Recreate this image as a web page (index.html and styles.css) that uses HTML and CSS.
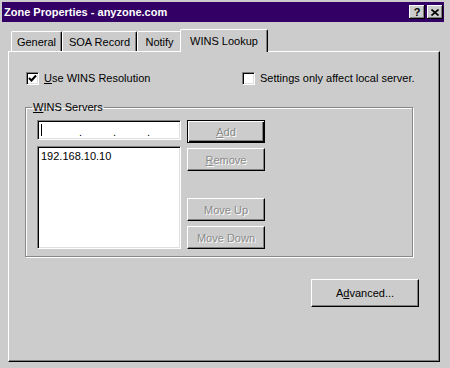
FILE: index.html
```html
<!DOCTYPE html>
<html lang="en">
<head>
    <meta charset="UTF-8">
    <title>Zone Properties - anyzone.com</title>
<link rel="stylesheet" href="styles.css">
</head>
<body>
  <div class="window">
    <div class="titlebar">
        <span class="title">Zone Properties - anyzone.com</span>
        <div class="title-buttons">
            <span class="tbtn">?</span>
            <span class="tbtn">
                <svg width="8" height="7" viewBox="0 0 8 7"><path d="M0.5 0.5 L7.5 6.5 M7.5 0.5 L0.5 6.5" stroke="#000" stroke-width="1.6"/></svg>
            </span>
        </div>
    </div>

    <div class="tabs">
        <div class="tab tab-general">General</div>
        <div class="tab tab-soa">SOA Record</div>
        <div class="tab tab-notify">Notify</div>
        <div class="tab tab-wins active">WINS Lookup</div>
    </div>

    <div class="panel">
        <div class="options">
            <label class="check">
                <span class="box"><svg width="9" height="9" viewBox="0 0 9 9"><path d="M1 4 L3.5 6.5 L8 1.5" fill="none" stroke="#000" stroke-width="2"/></svg></span>
                <span><u>U</u>se WINS Resolution</span>
            </label>
            <label class="check">
                <span class="box"></span>
                <span>Settings only affect local server.</span>
            </label>
        </div>

        <fieldset class="group">
            <legend><u>W</u>INS Servers</legend>
            <div class="group-body">
                <div class="fields">
                    <div class="ip-field">
                        <span class="caret"></span>
                        <span class="dot">.</span>
                        <span class="dot">.</span>
                        <span class="dot">.</span>
                    </div>
                    <div class="list">
                        <div class="list-item">192.168.10.10</div>
                    </div>
                </div>
                <div class="buttons">
                    <button class="btn default" disabled><u>A</u>dd</button>
                    <button class="btn" disabled><u>R</u>emove</button>
                    <button class="btn move-up" disabled>Move Up</button>
                    <button class="btn" disabled>Move Down</button>
                </div>
            </div>
        </fieldset>

        <div class="footer">
            <button class="btn advanced">A<u>d</u>vanced...</button>
        </div>
    </div>
  </div>
</body>
</html>
```

FILE: styles.css
```css
* {
    box-sizing: border-box;
}

body {
    margin: 0;
    background-color: #cccccc;
    font-family: "Liberation Sans", Arial, sans-serif;
    font-size: 11px;
    color: #000000;
}

.window {
    width: 446px;
    padding: 2px;
}

/* title bar */
.titlebar {
    display: flex;
    align-items: center;
    justify-content: space-between;
    height: 20px;
    padding: 0 1px 0 2px;
    background-color: #330066;
    color: #ffffff;
}

.title {
    font-weight: bold;
    font-size: 11px;
}

.title-buttons {
    display: flex;
    gap: 2px;
}

.tbtn {
    display: flex;
    align-items: center;
    justify-content: center;
    width: 16px;
    height: 14px;
    background-color: #cccccc;
    color: #000000;
    font-weight: bold;
    font-size: 11px;
    box-shadow: inset -1px -1px #000000, inset 1px 1px #ffffff, inset -2px -2px #808080;
}

/* tabs */
.tabs {
    display: flex;
    align-items: flex-end;
    height: 22px;
    margin: 7px 0 0 9px;
}

.tab {
    height: 20px;
    padding-top: 4px;
    text-align: center;
    background-color: #cccccc;
    border-top: 1px solid #ffffff;
    border-left: 1px solid #ffffff;
    border-right: 1px solid #000000;
    border-radius: 2px 2px 0 0;
    box-shadow: inset -1px 0 #808080;
}

.tab-general { width: 51px; }
.tab-soa { width: 75px; }
.tab-notify { width: 45px; }

.tab.active {
    position: relative;
    z-index: 1;
    width: 88px;
    height: 23px;
    margin: 0 0 -1px -2px;
    padding-top: 5px;
}

/* panel */
.panel {
    width: 432px;
    height: 311px;
    margin-left: 6px;
    padding: 20px 20px 0 16px;
    border: 1px solid;
    border-color: #ffffff #000000 #000000 #ffffff;
    box-shadow: inset -1px -1px #808080;
}

.options {
    display: grid;
    grid-template-columns: 216px 1fr;
    padding-left: 1px;
}

.check {
    display: flex;
    align-items: center;
    gap: 5px;
    height: 13px;
    line-height: 13px;
}

.box {
    display: flex;
    align-items: center;
    justify-content: center;
    width: 13px;
    height: 13px;
    background-color: #ffffff;
    border: 1px solid;
    border-color: #808080 #ffffff #ffffff #808080;
    box-shadow: inset 1px 1px #000000, inset -1px -1px #dfdfdf;
}

/* group box */
.group {
    width: 388px;
    margin: 16px 0 0;
    padding: 0;
    border: 1px solid #888888;
    box-shadow: 1px 1px #ffffff, inset 1px 1px #ffffff;
}

.group legend {
    margin-left: 6px;
    padding: 0 1px;
    line-height: 13px;
}

.group-body {
    display: flex;
    gap: 6px;
    padding: 6px 0 7px 11px;
}

.fields {
    width: 144px;
}

.ip-field,
.list {
    background-color: #ffffff;
    border: 1px solid;
    border-color: #808080 #ffffff #ffffff #808080;
    box-shadow: inset 1px 1px #000000, inset -1px -1px #dfdfdf;
}

.ip-field {
    display: grid;
    grid-template-columns: 38px 34px 34px 1fr;
    height: 20px;
    padding: 3px 0 0 3px;
}

.caret {
    width: 1px;
    height: 12px;
    background-color: #000000;
}

.dot {
    line-height: 12px;
    padding-top: 2px;
}

.list {
    height: 103px;
    margin-top: 6px;
    padding: 3px 3px;
}

.list-item {
    line-height: 13px;
}

/* buttons */
.buttons {
    display: flex;
    flex-direction: column;
    gap: 5px;
    width: 78px;
}

.btn {
    height: 23px;
    padding: 0;
    font-family: "Liberation Sans", Arial, sans-serif;
    font-size: 11px;
    color: #000000;
    background-color: #cccccc;
    border: 1px solid;
    border-color: #ffffff #000000 #000000 #ffffff;
    box-shadow: inset -1px -1px #808080;
    border-radius: 0;
}

.btn:disabled {
    color: #8a8a8a;
    text-shadow: 1px 1px 0 #ffffff;
}

.btn.default {
    border: 1px solid #000000;
    box-shadow: inset 1px 1px #ffffff, inset -1px -1px #000000, inset -2px -2px #808080;
}

.btn.move-up {
    margin-top: auto;
}

.footer {
    display: flex;
    justify-content: flex-end;
    margin-top: 22px;
}

.btn.advanced {
    width: 108px;
    height: 28px;
}
```
